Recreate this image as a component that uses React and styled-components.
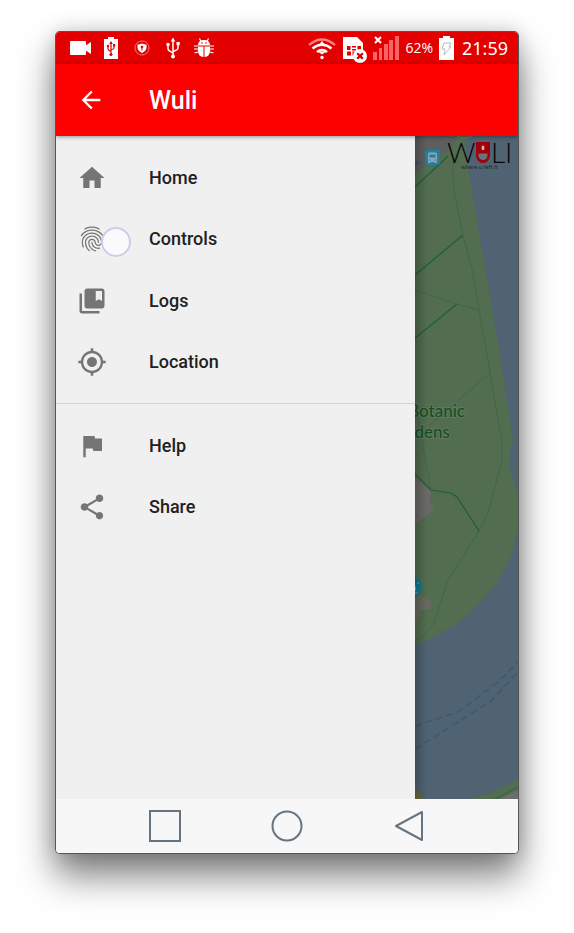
import React from "react";
import styled, { createGlobalStyle } from "styled-components";
import {
  MdArrowBack,
  MdHome,
  MdFingerprint,
  MdCollectionsBookmark,
  MdGpsFixed,
  MdFlag,
  MdShare,
} from "react-icons/md";

const GlobalStyle = createGlobalStyle`
  *, *::before, *::after { box-sizing: border-box; }
  body { margin: 0; background: #fff; font-family: Roboto, "Liberation Sans", sans-serif; }
`;

const Stage = styled.div`
  min-height: 100vh;
  display: flex;
  padding: 31px 55px 79px;
  overflow: hidden;
`;

const Phone = styled.main`
  flex: 1;
  min-width: 0;
  display: flex;
  flex-direction: column;
  border: 1px solid #555;
  border-top-color: #8c3a3a;
  border-radius: 5px;
  overflow: hidden;
  background: #f7f7f7;
  box-shadow: 0 22px 36px rgba(0, 0, 0, 0.5), 0 0 20px rgba(0, 0, 0, 0.18);
`;

const StatusBar = styled.div`
  height: 32px;
  flex: none;
  display: flex;
  align-items: center;
  justify-content: space-between;
  padding: 0 10px 0 14px;
  background: #e20000;
  color: #fff;
`;

const StatusGroup = styled.div`
  display: flex;
  align-items: center;
  gap: ${(p) => p.$gap}px;
`;

const Glyph = styled.svg`
  display: block;
  flex: none;
  overflow: visible;
`;

const Battery = styled.span`
  font: 400 14px/24px "Open Sans", Lato, sans-serif;
`;

const Clock = styled.time`
  font: 400 18px/24px "Noto Sans", sans-serif;
  margin-left: 2px;
`;

const AppBar = styled.header`
  height: 72px;
  flex: none;
  display: flex;
  align-items: center;
  gap: 44px;
  padding: 2px 21px 0;
  position: relative;
  z-index: 1;
  background: #fd0000;
  color: #fff;
  box-shadow: 0 1px 4px rgba(0, 0, 0, 0.4);
`;

const BackButton = styled.button`
  display: flex;
  padding: 0 0 2px;
  border: 0;
  background: none;
  color: inherit;
  font-size: 28px;
`;

const Title = styled.h1`
  margin: 0;
  font-size: 25px;
  line-height: 32px;
  font-weight: 500;
`;

const Body = styled.div`
  flex: 1;
  display: grid;
  grid-template-columns: minmax(0, 359fr) minmax(0, 103fr);
`;

const Drawer = styled.nav`
  padding: 11px 0;
  background: #f0f0f0;
`;

const MenuGroup = styled.ul`
  height: ${(p) => p.$height}px;
  margin: 0;
  padding: 0;
  list-style: none;
  display: grid;
  grid-auto-rows: 1fr;
`;

const MenuLink = styled.a`
  height: 100%;
  display: flex;
  align-items: center;
  gap: 42px;
  padding: 0 21px;
  color: #212121;
  font-size: 18px;
  line-height: 24px;
  font-weight: 500;
  text-decoration: none;
`;

const MenuIcon = styled.span`
  position: relative;
  display: flex;
  font-size: 30px;
  color: #757575;
`;

const TouchPoint = styled.span`
  position: absolute;
  left: 24px;
  top: 3px;
  width: 30px;
  height: 30px;
  border: 2px solid #cdcdeb;
  border-radius: 50%;
  background: #fafafd;
`;

const Divider = styled.hr`
  margin: 10px 0 11px;
  border: 0;
  border-top: 1px solid #d3d3d3;
`;

const MapPane = styled.section`
  position: relative;
  overflow: hidden;
  background: #506372;
`;

const MapDrawing = styled.svg`
  position: absolute;
  inset: 0;
  width: 100%;
  height: 100%;
`;

const MapShade = styled.div`
  position: absolute;
  inset: 0;
  background: linear-gradient(to right, rgba(0, 0, 0, 0.22), transparent 12px);
`;

const SystemNav = styled.footer`
  height: 54px;
  flex: none;
  display: flex;
  align-items: center;
  justify-content: center;
  gap: 90px;
  background: #f7f7f7;
`;

const SystemButton = styled.button`
  width: 32px;
  height: 32px;
  padding: 0;
  border: 0;
  background: none;
  color: #657480;
`;

function NotificationIcons() {
  return (
    <StatusGroup $gap={9}>
      <Glyph width="22" height="24" viewBox="0 0 22 24" fill="#fff">
        <rect x="0" y="5" width="16" height="14" rx="1" />
        <path d="M15 10l6-4v12l-6-4z" />
      </Glyph>
      <Glyph width="22" height="24" viewBox="1 0 22 24" fill="#fff">
        <path d="M4 3h4V1h6v2h4v20H4z" />
        <g stroke="#e20000" fill="none" strokeWidth="1.200">
          <path d="M11 7v11M8 10v3q0 1 3 2.500M14 9v3q0 1-3 2" />
        </g>
        <g fill="#e20000">
          <path d="M11 5l1.800 3H9.200z" />
          <circle cx="11" cy="18.500" r="1.500" />
          <circle cx="8" cy="10" r="1.200" />
          <rect x="13" y="8" width="2.200" height="2.400" />
        </g>
      </Glyph>
      <Glyph width="22" height="24" viewBox="1 0 22 24" fill="#fff">
        <circle cx="11" cy="12" r="7" fill="none" stroke="#f77" strokeWidth="1" />
        <path d="M11 7.500l4.500 1.200v3q0 3-4.500 5.300-4.500-2.300-4.500-5.300v-3z" />
        <circle cx="11" cy="11" r="1.300" fill="#e20000" />
        <path d="M10.500 11h1v3.500h-1z" fill="#e20000" />
      </Glyph>
      <Glyph width="22" height="24" viewBox="1 0 22 24" fill="#fff">
        <path d="M11 4v17M6 9v4q0 1.500 5 4M16 8v4q0 2-5 3.500" fill="none" stroke="#fff" strokeWidth="1.500" />
        <path d="M11 1.500l2.300 4H8.700z" />
        <circle cx="11" cy="20.500" r="2" />
        <circle cx="6" cy="8.500" r="1.700" />
        <rect x="14.500" y="6" width="3.200" height="3.200" />
      </Glyph>
      <Glyph width="22" height="24" viewBox="1 0 22 24" fill="#fff">
        <path d="M5 9.500q0-5.500 6-5.500t6 5.500z" />
        <path d="M8 5.500L6.500 2.500M14 5.500L15.500 2.500M1 10h4M1 13h4M1.500 17l3.500-1M21 10h-4M21 13h-4M20.500 17l-3.500-1" stroke="#fff" strokeWidth="1.200" />
        <path d="M5 10.500h5.500v10.500Q5 20.500 5 15zM11.500 10.500H17v4.500q0 5.500-5.500 6z" />
        <g fill="#e20000">
          <circle cx="9" cy="7" r=".8" />
          <circle cx="13" cy="7" r=".8" />
        </g>
      </Glyph>
    </StatusGroup>
  );
}

function SystemStatus() {
  return (
    <StatusGroup $gap={6}>
      <Glyph width="28" height="24" viewBox="0 0 28 24" fill="none" stroke="#fff">
        <path d="M1 9Q14-2 27 9" stroke="#ff8080" strokeWidth="2.200" />
        <path d="M4.500 12.500Q14 5 23.500 12.500" strokeWidth="2.600" />
        <path d="M9 16Q14 12 19 16" strokeWidth="2.600" />
        <path d="M14 5l4 5h-8zM14 18.500l4-3h-8z" fill="#fff" stroke="none" />
        <circle cx="14" cy="21.500" r="1.700" fill="#fff" stroke="none" />
      </Glyph>
      <Glyph width="25" height="24" viewBox="-1 0 25 24" fill="#fff">
        <path d="M0 1h14l6 6v16H0z" />
        <path d="M4 10h3.500v4H4zM9 10h4v1.500H9zM14.500 10H18v4h-3.500zM9 13h4v1.500H9zM4 15.500h4v4H4zM9.500 15.500h3v4h-3z" fill="#e20000" />
        <circle cx="17" cy="20" r="7" />
        <path d="M14.200 17.200l5.600 5.600M19.800 17.200l-5.600 5.600" stroke="#d00000" strokeWidth="2.300" />
      </Glyph>
      <Glyph width="26" height="24" viewBox="0 0 26 24" fill="#f86464">
        <path d="M0 16h4v8H0zM6 12h3v12H6zM11 8h4v16h-4zM16 4h4v20h-4zM22 0h4v24h-4z" />
        <path d="M2 1l6 6M8 1L2 7" stroke="#fff" strokeWidth="2" />
      </Glyph>
      <Battery>62%</Battery>
      <Glyph width="15" height="24" viewBox="0 0 15 24" fill="#fff">
        <path d="M0 2h4V0h7v2h4v22H0z" />
        <path d="M5 7h7l-2 4h2l-7 8 1-6H3z" fill="none" stroke="#b9b9b9" strokeWidth="1" />
      </Glyph>
      <Clock>21:59</Clock>
    </StatusGroup>
  );
}

function WuliMap() {
  return (
    <MapPane aria-label="Map">
      <MapDrawing viewBox="0 0 103 663" preserveAspectRatio="xMinYMin slice">
        <path
          fill="#526d4f"
          d="M0 0h50l3 32 31 182 14 90q-6 20-3 30l8 23v34l-6 26-15 30-17 19-20 20-35 20-10 3z"
        />
        <path d="M0 0h42l-2 6-7 8L0 37z" fill="#5d5e5f" />
        <path d="M0 30v-4l2-3v4l5-1z" fill="#465166" />
        <path d="M42 0q8 4 15 0" stroke="#6a785f" strokeWidth="2" fill="none" />
        <path d="M0 341l16 15-1 11 4 4-4 6-15 11z" fill="#696a66" />
        <path d="M5 459l12 7-2 7-10 1-3 10H0v-25z" fill="#69695f" />
        <g fill="none" stroke="#3e6949" strokeWidth="1">
          <path d="M38 24v20l2 17 8 38 10 38 6 37 9 50 2 13 12 69v18l-14 53-9 18-31 49-14 44-14 15-5 2" />
          <path d="M0 154l42 14 22 6M15 289l60-52M2 277l5 27 9 50" />
        </g>
        <g fill="none" stroke="#1d6034" strokeWidth="1.200">
          <path d="M0 51l33-31M0 139l48-40M0 202l42-34M0 338l16 16 20 3 6 4 22 34" />
        </g>
        <g fill="none" stroke="#3c5970" strokeWidth="1.500" strokeDasharray="7 4">
          <path d="M0 590l43-14 40-30 20-20M0 613l75-47 28-30" />
        </g>
        <path d="M0 651l9 12H0z" fill="#6b6840" />
        <path d="M54 663q30-6 49-21v21z" fill="#526d4f" />
        <path d="M85 663l18-9v9z" fill="#69706b" />
        <path d="M80 663l23-12" stroke="#316348" />
        <g
          fill="#12521f"
          fontFamily="Lato, sans-serif"
          fontSize="17"
          fontWeight="500"
          textAnchor="end"
          stroke="#66785f"
          strokeWidth="2"
          paintOrder="stroke"
        >
          <text x="50" y="281">Botanic</text>
          <text x="35" y="302">Gardens</text>
        </g>
        <circle cx="-4" cy="451" r="11" fill="#0a7c90" stroke="#506b66" />
        <path d="M-1 446l2 9M3 446v2M0 457h3" fill="none" stroke="#8fa5a5" strokeWidth="1" />
        <rect x="10" y="14" width="15" height="15" rx="2.500" fill="#1f7fa6" />
        <rect x="13" y="16.500" width="9" height="9.500" rx="1.500" fill="#8fa5ad" />
        <path d="M14.500 18.500h6v3h-6z" fill="#1f7fa6" />
        <path d="M14 24h1.500M19.500 24H21" stroke="#1f7fa6" />
        <path d="M13 26.500h2.500M19.500 26.500H22" stroke="#8fa5ad" strokeWidth="1" />
        <g fill="#050505" fontFamily="Lato, sans-serif" fontSize="28" fontWeight="300">
          <text x="32" y="27">W</text>
          <text x="76" y="27">L</text>
          <text x="90" y="27">I</text>
        </g>
        <path d="M61 6h14v13a7 8 0 0 1-14 0z" fill="#a00008" />
        <path d="M63.500 17.500h9v2a4.500 4.500 0 0 1-9 0z" fill="#64757d" />
        <path d="M68 9l1.500 2-.5 3h-2l-.5-3z" fill="#cdb5b5" />
        <text x="46" y="33" fill="#252b2a" fontFamily="Lato, sans-serif" fontSize="6">
          where u left it
        </text>
      </MapDrawing>
      <MapShade />
    </MapPane>
  );
}

const primaryItems = [
  { label: "Home", Icon: MdHome },
  { label: "Controls", Icon: MdFingerprint, touched: true },
  { label: "Logs", Icon: MdCollectionsBookmark },
  { label: "Location", Icon: MdGpsFixed },
];

const secondaryItems = [
  { label: "Help", Icon: MdFlag },
  { label: "Share", Icon: MdShare },
];

function Menu({ items, height }) {
  return (
    <MenuGroup $height={height}>
      {items.map(({ label, Icon, touched }) => (
        <li key={label}>
          <MenuLink href={`#${label.toLowerCase()}`}>
            <MenuIcon>
              <Icon aria-hidden="true" />
              {touched && <TouchPoint />}
            </MenuIcon>
            {label}
          </MenuLink>
        </li>
      ))}
    </MenuGroup>
  );
}

export default function App() {
  return (
    <>
      <GlobalStyle />
      <Stage>
        <Phone>
          <StatusBar>
            <NotificationIcons />
            <SystemStatus />
          </StatusBar>
          <AppBar>
            <BackButton aria-label="Back">
              <MdArrowBack />
            </BackButton>
            <Title>Wuli</Title>
          </AppBar>
          <Body>
            <Drawer aria-label="Main menu">
              <Menu items={primaryItems} height={246} />
              <Divider />
              <Menu items={secondaryItems} height={123} />
            </Drawer>
            <WuliMap />
          </Body>
          <SystemNav>
            <SystemButton aria-label="Recent apps">
              <Glyph width="32" height="32" viewBox="0 0 32 32" fill="none" stroke="currentColor" strokeWidth="2">
                <rect x="1" y="1" width="30" height="30" />
              </Glyph>
            </SystemButton>
            <SystemButton aria-label="Home screen">
              <Glyph width="32" height="32" viewBox="0 0 32 32" fill="none" stroke="currentColor" strokeWidth="2">
                <circle cx="16" cy="16" r="14.500" />
              </Glyph>
            </SystemButton>
            <SystemButton aria-label="Go back">
              <Glyph width="32" height="32" viewBox="0 0 32 32" fill="none" stroke="currentColor" strokeWidth="2" strokeLinejoin="round">
                <path d="M3 16L29 2v28z" />
              </Glyph>
            </SystemButton>
          </SystemNav>
        </Phone>
      </Stage>
    </>
  );
}
